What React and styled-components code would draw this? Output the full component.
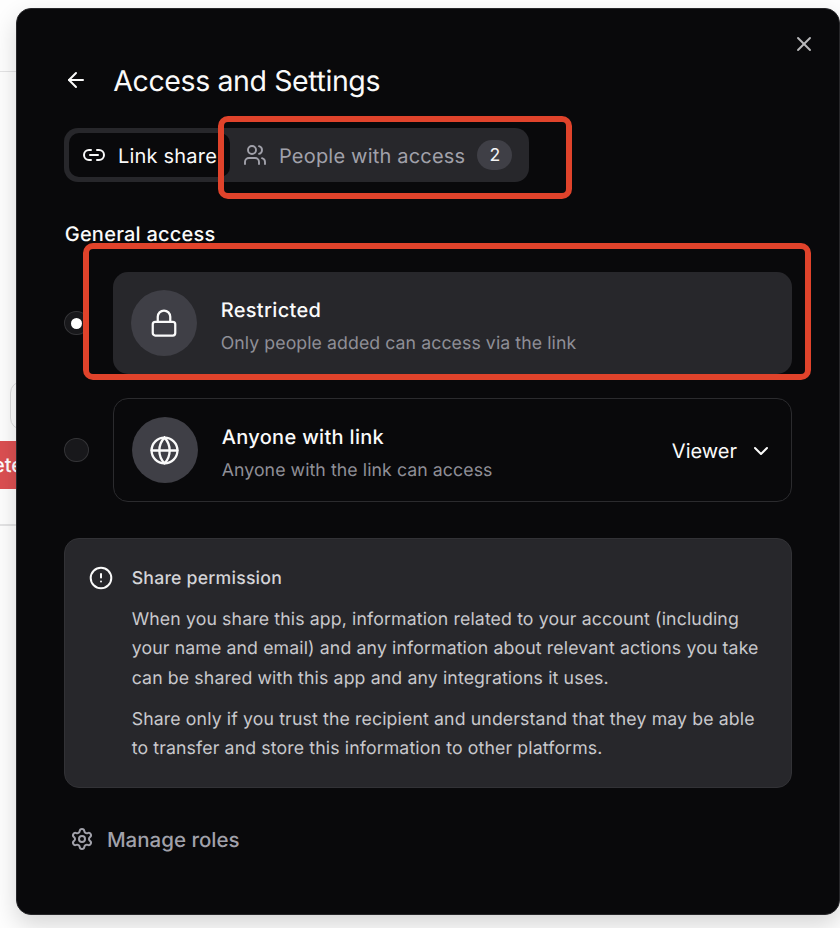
import React, {useState} from 'react';
import styled, {createGlobalStyle} from 'styled-components';
import {ArrowLeft, ChevronDown, Globe, Link2, Lock, Settings, Users, X} from 'lucide-react';

const GlobalStyle = createGlobalStyle`
  * {
    box-sizing: border-box;
  }
  body {
    margin: 0;
    background: #fefefe;
    font-family: Inter, 'Liberation Sans', sans-serif;
    text-rendering: geometricPrecision;
  }
  button {
    font-family: inherit;
    text-rendering: inherit;
    border: none;
    background: none;
    padding: 0;
    margin: 0;
  }
  svg {
    display: block;
    flex-shrink: 0;
  }
`
const Page = styled.div`
  display: flex;
  width: 840px;
  height: 928px;
  overflow: hidden;
`
/* the sliver of the page left visible beside the dialog */
const PageEdge = styled.div`
  display: flex;
  flex-direction: column;
  width: 16px;
  height: 100%;
  overflow: hidden;
`
const EdgeHeader = styled.div`
  height: 72px;
  border-bottom: 1px solid #e4e4e5;
`
const EdgeField = styled.div`
  width: 40px;
  height: 49px;
  margin: 309px 0 11px 10px;
  border: 1px solid #dededf;
  border-radius: 12px;
`
const EdgeButton = styled.div`
  display: flex;
  align-items: center;
  height: 48px;
  background: #dc5052;
  color: #fff;
  font-size: 20px;
  font-weight: 500;
  text-indent: -7px;
`
const EdgeFooter = styled.div`
  height: 37px;
  border-bottom: 2px solid #e4e4e5;
`
const Dialog = styled.section`
  position: relative;
  width: 824px;
  height: 907px;
  margin-top: 8px;
  padding: 47px 47px 0;
  border: 1px solid #27272a;
  border-radius: 15px;
  background: #09090b;
  color: #fafafa;
  box-shadow: 0 10px 24px rgba(0, 0, 0, 0.16);
`
const CloseButton = styled.button`
  position: absolute;
  top: 23px;
  right: 23.5px;
  color: #b9b9bb;
`
const Header = styled.header`
  display: flex;
  align-items: center;
  gap: 25px;
  height: 48px;
  padding-left: 0.3px;
`
const Title = styled.h1`
  margin: 0;
  font-size: 28.5px;
  font-weight: 400;
  letter-spacing: -0.4px;
  white-space: nowrap;
`
const TabBar = styled.div`
  position: relative;
  display: flex;
  width: 465px;
  height: 54px;
  margin-top: 24px;
  padding: 5px;
  border-radius: 14px;
  background: #27272b;
`
const Tab = styled.button`
  display: flex;
  align-items: center;
  width: ${props => props.$width}px;
  height: 44px;
  padding-left: 13px;
  border-radius: 10px;
  background: ${props => props.$active ? '#09090b' : 'transparent'};
  color: ${props => props.$active ? '#fafafa' : '#a1a1aa'};
  font-size: 20px;
  white-space: nowrap;
`
const TabLabel = styled.span`
  margin: 2px 0 0 12px;
  letter-spacing: 0.2px;
`
const Count = styled.span`
  display: flex;
  align-items: center;
  justify-content: center;
  width: 35px;
  height: 30px;
  margin-left: 12px;
  border-radius: 15px;
  background: #3f3f46;
  color: #f4f4f5;
  font-size: 17.7px;
`
/* red annotation frame drawn over the dialog */
const Highlight = styled.div`
  position: absolute;
  top: ${props => props.$top}px;
  left: ${props => props.$left}px;
  width: ${props => props.$width}px;
  height: ${props => props.$height}px;
  border: 6px solid #e0432b;
  border-radius: 10px;
  pointer-events: none;
`
const SectionTitle = styled.h2`
  height: 30px;
  margin: 37px 0 23px 0.7px;
  font-size: 20px;
  font-weight: 500;
  line-height: 30px;
  letter-spacing: 0.24px;
`
const OptionList = styled.div`
  position: relative;
  display: flex;
  flex-direction: column;
  gap: 24px;
  width: 728px;
`
const Option = styled.div`
  display: flex;
  align-items: center;
  gap: 24px;
`
const Radio = styled.button`
  display: flex;
  align-items: center;
  justify-content: center;
  width: 24.5px;
  height: 24px;
  border: 1px solid #343437;
  border-radius: 50%;
  background: #18181b;
`
const RadioDot = styled.span`
  width: 11px;
  height: 11px;
  border-radius: 50%;
  background: #fff;
`
const OptionCard = styled.div`
  display: flex;
  align-items: center;
  flex: 1;
  height: ${props => props.$filled ? 102 : 104}px;
  padding: 0 18px;
  border: ${props => props.$filled ? 'none' : '1px solid #2b2b2e'};
  border-radius: 15px;
  background: ${props => props.$filled ? '#27272b' : 'transparent'};
`
const IconCircle = styled.div`
  display: flex;
  align-items: center;
  justify-content: center;
  width: 66px;
  height: 66px;
  border-radius: 50%;
  background: #3f3f46;
`
const OptionText = styled.div`
  flex: 1;
  margin: 8px 0 0 24.2px;
`
const OptionName = styled.div`
  height: 30px;
  font-size: 20px;
  font-weight: 500;
  line-height: 30px;
  letter-spacing: 0.32px;
`
const OptionHint = styled.div`
  height: 30px;
  margin-top: 4.5px;
  color: #8f8f97;
  font-size: 17.7px;
  line-height: 30px;
  letter-spacing: 0.08px;
`
const RoleSelect = styled.button`
  display: flex;
  align-items: center;
  gap: 12px;
  padding-top: 1px;
  color: #fafafa;
  font-size: 20px;
`
const InfoCard = styled.div`
  display: flex;
  gap: 18.7px;
  width: 728px;
  height: 250px;
  margin-top: 36px;
  padding: 25px 24px;
  border: 1px solid #323236;
  border-radius: 15px;
  background: #27272b;
`
const InfoTitle = styled.h3`
  margin: 0;
  font-size: 17.7px;
  font-weight: 500;
  line-height: 29px;
  letter-spacing: 0.2px;
  color: #d4d4d8;
`
const InfoText = styled.p`
  margin: 11.6px 0 0;
  color: #c9c9cd;
  font-size: 17.7px;
  line-height: 29.5px;
  letter-spacing: 0.13px;
  white-space: nowrap;
`
const ManageButton = styled.button`
  display: flex;
  align-items: center;
  gap: 12.5px;
  height: 30px;
  margin: 36px 0 0 6.4px;
  color: #a1a1aa;
  font-size: 20.5px;
  font-weight: 500;
`
const AlertSvg = styled.svg`
  margin-top: 2px;
`
const AlertIcon = () => (
  <AlertSvg width="24" height="24" viewBox="0 0 24 24" fill="none" stroke="#fafafa" strokeWidth="2" strokeLinecap="round">
    <circle cx="12" cy="12" r="10.3" />
    <path d="M12 8v3.6" />
    <path d="M12 15.4v.1" />
  </AlertSvg>
)

const options = [
  {id: 'restricted', name: 'Restricted', hint: 'Only people added can access via the link', icon: <Lock size={30} strokeWidth={1.8} />},
  {id: 'anyone', name: 'Anyone with link', hint: 'Anyone with the link can access', icon: <Globe size={31} strokeWidth={1.8} />},
]

const App = () => {
  const [tab, setTab] = useState('link');
  const [access, setAccess] = useState('restricted');

  return (
    <Page>
      <GlobalStyle />
      <PageEdge>
        <EdgeHeader />
        <EdgeField />
        <EdgeButton>ete</EdgeButton>
        <EdgeFooter />
      </PageEdge>
      <Dialog>
        <CloseButton><X size={24} strokeWidth={1.9} /></CloseButton>
        <Header>
          <ArrowLeft size={24} />
          <Title>Access and Settings</Title>
        </Header>
        <TabBar>
          <Tab $width={161} $active={tab === 'link'} onClick={() => setTab('link')}>
            <Link2 size={24} />
            <TabLabel>Link share</TabLabel>
          </Tab>
          <Tab $width={294} $active={tab === 'people'} onClick={() => setTab('people')}>
            <Users size={24} strokeWidth={1.9} />
            <TabLabel>People with access</TabLabel>
            <Count>2</Count>
          </Tab>
          <Highlight $top={-12} $left={154} $width={354} $height={83} />
        </TabBar>
        <SectionTitle>General access</SectionTitle>
        <OptionList>
          {options.map(option => (
            <Option key={option.id}>
              <Radio onClick={() => setAccess(option.id)}>
                {access === option.id ? <RadioDot /> : null}
              </Radio>
              <OptionCard $filled={access === option.id}>
                <IconCircle>{option.icon}</IconCircle>
                <OptionText>
                  <OptionName>{option.name}</OptionName>
                  <OptionHint>{option.hint}</OptionHint>
                </OptionText>
                {option.id === 'anyone' ? (
                  <RoleSelect>
                    Viewer
                    <ChevronDown size={24} />
                  </RoleSelect>
                ) : null}
              </OptionCard>
            </Option>
          ))}
          <Highlight $top={-29} $left={19} $width={728} $height={137} />
        </OptionList>
        <InfoCard>
          <AlertIcon />
          <div>
            <InfoTitle>Share permission</InfoTitle>
            <InfoText>
              When you share this app, information related to your account (including<br />
              your name and email) and any information about relevant actions you take<br />
              can be shared with this app and any integrations it uses.
            </InfoText>
            <InfoText>
              Share only if you trust the recipient and understand that they may be able<br />
              to transfer and store this information to other platforms.
            </InfoText>
          </div>
        </InfoCard>
        <ManageButton>
          <Settings size={24} />
          Manage roles
        </ManageButton>
      </Dialog>
    </Page>
  )
}
export default App
